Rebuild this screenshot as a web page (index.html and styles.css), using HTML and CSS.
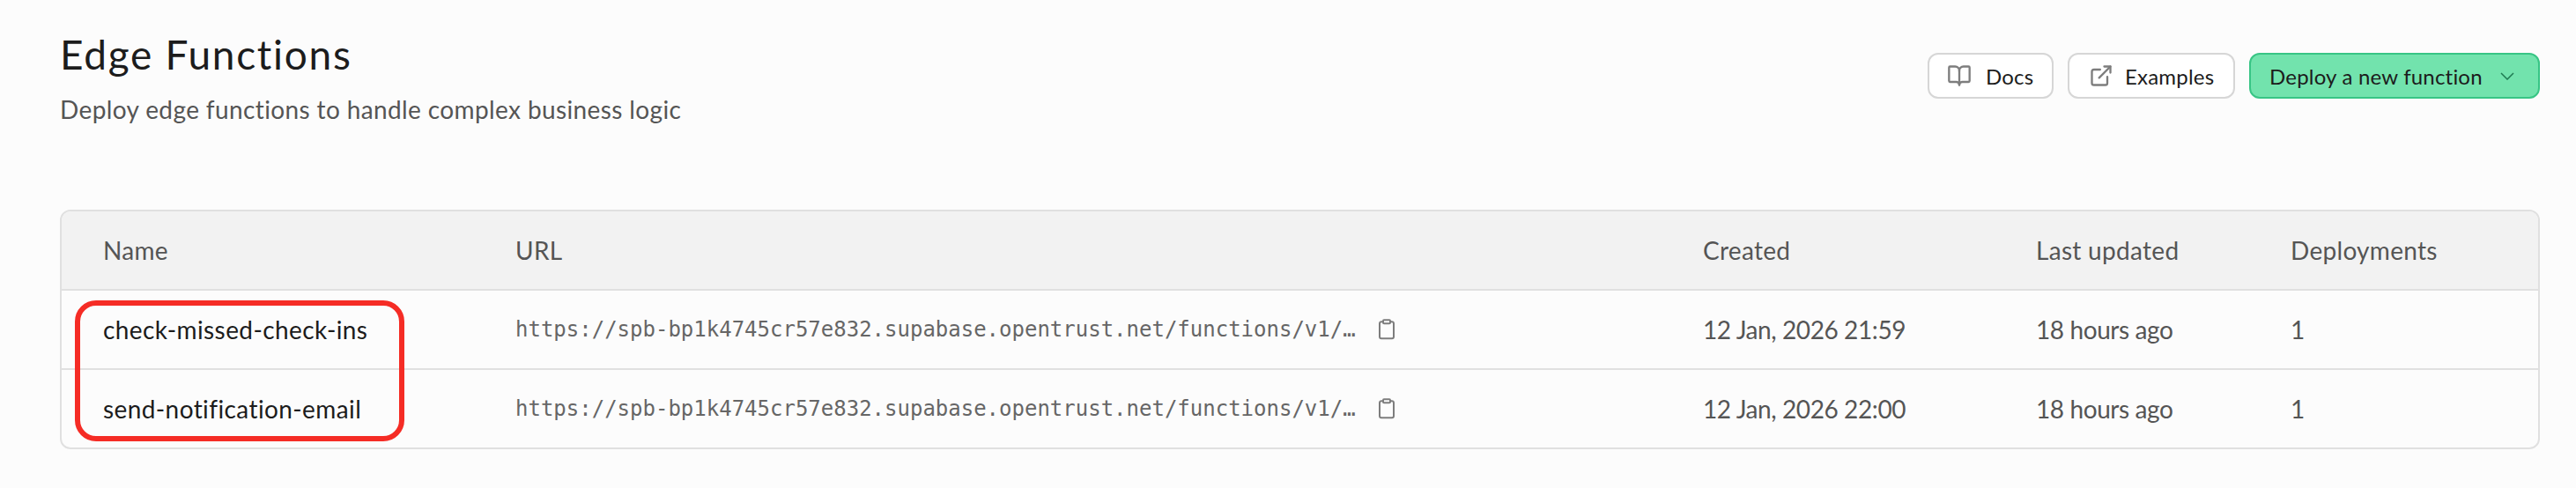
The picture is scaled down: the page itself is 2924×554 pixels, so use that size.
FILE: index.html
```html
<!DOCTYPE html>
<html lang="en">
<head>
    <meta charset="UTF-8">
    <meta name="viewport" content="width=device-width, initial-scale=1.0">
    <title>Edge Functions</title>
    <link rel="stylesheet" href="styles.css">
</head>
<body>
    <div class="page">
        <header class="page-header">
            <div class="page-title">
                <h1>Edge Functions</h1>
                <p>Deploy edge functions to handle complex business logic</p>
            </div>
            <div class="actions">
                <a class="btn btn-docs" href="#">
                    <svg class="btn-icon" viewBox="0 0 24 24"><path d="M12 7v14"/><path d="M3 18a1 1 0 0 1-1-1V4a1 1 0 0 1 1-1h5a4 4 0 0 1 4 4 4 4 0 0 1 4-4h5a1 1 0 0 1 1 1v13a1 1 0 0 1-1 1h-6a3 3 0 0 0-3 3 3 3 0 0 0-3-3z"/></svg>
                    Docs
                </a>
                <a class="btn btn-examples" href="#">
                    <svg class="btn-icon" viewBox="0 0 24 24"><path d="M15 3h6v6"/><path d="M10 14 21 3"/><path d="M18 13v6a2 2 0 0 1-2 2H5a2 2 0 0 1-2-2V8a2 2 0 0 1 2-2h6"/></svg>
                    Examples
                </a>
                <a class="btn btn-primary" href="#">
                    Deploy a new function
                    <svg class="chevron" viewBox="0 0 16 9"><path d="M1 1l7 7 7-7"/></svg>
                </a>
            </div>
        </header>

        <div class="table-wrap">
            <table class="functions">
                <colgroup>
                    <col class="col-name">
                    <col class="col-url">
                    <col class="col-created">
                    <col class="col-updated">
                    <col>
                </colgroup>
                <thead>
                    <tr>
                        <th>Name</th>
                        <th>URL</th>
                        <th>Created</th>
                        <th>Last updated</th>
                        <th>Deployments</th>
                    </tr>
                </thead>
                <tbody>
                    <tr>
                        <td class="fn-name">check-missed-check-ins</td>
                        <td>
                            <div class="url">
                                <span>https://spb-bp1k4745cr57e832.supabase.opentrust.net/functions/v1/…</span>
                                <svg class="copy-icon" viewBox="0 0 20 24"><rect x="6" y="1.2" width="8" height="4" rx="1"/><path d="M14 3.2h2a2 2 0 0 1 2 2v15a2 2 0 0 1-2 2H4a2 2 0 0 1-2-2v-15a2 2 0 0 1 2-2h2"/></svg>
                            </div>
                        </td>
                        <td class="meta">12 Jan, 2026 21:59</td>
                        <td class="meta">18 hours ago</td>
                        <td>1</td>
                    </tr>
                    <tr>
                        <td class="fn-name">send-notification-email</td>
                        <td>
                            <div class="url">
                                <span>https://spb-bp1k4745cr57e832.supabase.opentrust.net/functions/v1/…</span>
                                <svg class="copy-icon" viewBox="0 0 20 24"><rect x="6" y="1.2" width="8" height="4" rx="1"/><path d="M14 3.2h2a2 2 0 0 1 2 2v15a2 2 0 0 1-2 2H4a2 2 0 0 1-2-2v-15a2 2 0 0 1 2-2h2"/></svg>
                            </div>
                        </td>
                        <td class="meta">12 Jan, 2026 22:00</td>
                        <td class="meta">18 hours ago</td>
                        <td>1</td>
                    </tr>
                </tbody>
            </table>
            <div class="highlight"></div>
        </div>
    </div>
</body>
</html>
```

FILE: styles.css
```css
body {
    font-family: 'Lato', 'Liberation Sans', sans-serif;
    background-color: #fcfcfc;
    color: #1c1c1c;
    margin: 0;
}

.page {
    padding: 34px 41px 0 68px;
}

.page-header {
    display: flex;
    justify-content: space-between;
    align-items: flex-start;
}

.page-title h1 {
    margin: 0;
    font-size: 46px;
    line-height: 56px;
    font-weight: 400;
    letter-spacing: 1.7px;
}

.page-title p {
    margin: 16px 0 0;
    font-size: 28px;
    line-height: 36px;
    color: #555;
    letter-spacing: 0.38px;
}

.actions {
    display: flex;
    gap: 16px;
    margin-top: 26px;
}

.btn {
    display: flex;
    align-items: center;
    box-sizing: border-box;
    height: 52px;
    border: 2px solid #d6d6d6;
    border-radius: 12px;
    background-color: #fff;
    color: #1c1c1c;
    font-size: 24px;
    letter-spacing: 0.2px;
    text-decoration: none;
    white-space: nowrap;
}

.btn-docs { width: 143px; padding-left: 20px; gap: 16px; }
.btn-examples { width: 190px; padding-left: 22px; gap: 13px; }

.btn-primary {
    width: 330px;
    padding-left: 21px;
    gap: 20px;
    background-color: #72e3ad;
    border-color: #38c585;
}

.btn-icon {
    width: 28px;
    height: 28px;
    fill: none;
    stroke: #7d7d7d;
    stroke-width: 2;
    stroke-linecap: round;
    stroke-linejoin: round;
}

.chevron {
    width: 16px;
    height: 9px;
    fill: none;
    stroke: #1f7a52;
    stroke-width: 1.5;
}

.table-wrap {
    position: relative;
    margin-top: 96px;
}

.functions {
    width: 100%;
    table-layout: fixed;
    border-collapse: separate;
    border-spacing: 0;
    border: 2px solid #e0e0e0;
    border-radius: 12px;
    font-size: 28px;
    color: #555;
}

.col-name { width: 468px; }
.col-url { width: 1348px; }
.col-created { width: 378px; }
.col-updated { width: 289px; }

.functions th {
    height: 88px;
    padding: 0 0 0 47px;
    background-color: #f2f2f2;
    border-bottom: 2px solid #e0e0e0;
    text-align: left;
    font-weight: 400;
    letter-spacing: 0.3px;
}

.functions th:first-child { border-top-left-radius: 10px; }
.functions th:last-child { border-top-right-radius: 10px; }

.functions td {
    height: 88px;
    padding: 0 0 0 47px;
}

.functions tbody tr:first-child td {
    border-bottom: 2px solid #e0e0e0;
}

.functions .fn-name {
    color: #1c1c1c;
    letter-spacing: 0.4px;
}

.functions .meta {
    letter-spacing: -0.4px;
}

.url {
    display: flex;
    align-items: center;
    gap: 25px;
    font-family: 'DejaVu Sans Mono', 'Liberation Mono', monospace;
    font-size: 24px;
    color: #666;
}

.copy-icon {
    width: 20px;
    height: 24px;
    fill: none;
    stroke: #7d7d7d;
    stroke-width: 2;
    stroke-linecap: round;
    stroke-linejoin: round;
}

/* red annotation drawn over the name column */
.highlight {
    position: absolute;
    left: 17px;
    top: 103px;
    width: 374px;
    height: 160px;
    box-sizing: border-box;
    border: 6px solid #f52c25;
    border-radius: 24px;
}
```
